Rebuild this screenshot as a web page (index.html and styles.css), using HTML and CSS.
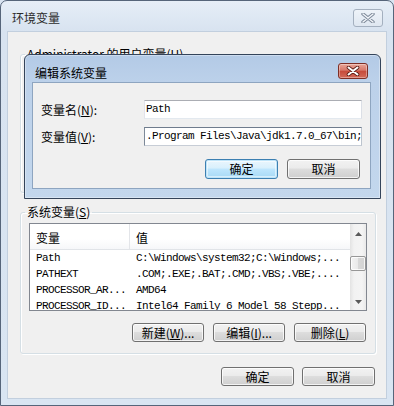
FILE: index.html
```html
<!DOCTYPE html>
<html>
<head>
<meta charset="utf-8">
<title>环境变量</title>
<link rel="stylesheet" href="styles.css">
</head>
<body>
<div class="win">
  <div class="win-title">
    <span class="title">环境变量</span>
    <span class="close-inactive">
      <svg width="14" height="10" viewBox="0 0 14 10"><path d="M2 1L12 9M12 1L2 9" stroke="#7f8b9b" stroke-width="3.4" stroke-linecap="round"/><path d="M2 1L12 9M12 1L2 9" stroke="#f4f7fb" stroke-width="1.4" stroke-linecap="round"/></svg>
    </span>
  </div>
  <div class="client">
    <fieldset class="group user">
      <legend>Administrator 的用户变量(<u>U</u>)</legend>
    </fieldset>
    <fieldset class="group sys">
      <legend>系统变量(<u>S</u>)</legend>
      <div class="list">
        <div class="list-main">
          <div class="hdr"><div class="c1">变量</div><div class="c2">值</div></div>
          <div class="row"><span class="c1">Path</span><span class="c2">C:\Windows\system32;C:\Windows;...</span></div>
          <div class="row"><span class="c1">PATHEXT</span><span class="c2">.COM;.EXE;.BAT;.CMD;.VBS;.VBE;....</span></div>
          <div class="row"><span class="c1">PROCESSOR_AR...</span><span class="c2">AMD64</span></div>
          <div class="row"><span class="c1">PROCESSOR_ID...</span><span class="c2">Intel64 Family 6 Model 58 Stepp...</span></div>
        </div>
        <div class="vscroll">
          <div class="sb-up"><svg width="7" height="4" viewBox="0 0 7 4"><path d="M0 4L3.5 0L7 4Z" fill="#5a5a5a"/></svg></div>
          <div class="sb-gap1"></div>
          <div class="sb-thumb"></div>
          <div class="sb-gap2"></div>
          <div class="sb-down"><svg width="7" height="4" viewBox="0 0 7 4"><path d="M0 0L3.5 4L7 0Z" fill="#5a5a5a"/></svg></div>
        </div>
      </div>
      <div class="btnrow group-btns">
        <span class="btn">新建(<u>W</u>)...</span>
        <span class="btn">编辑(<u>I</u>)...</span>
        <span class="btn">删除(<u>L</u>)</span>
      </div>
    </fieldset>
    <div class="btnrow main-btns">
      <span class="btn wide">确定</span>
      <span class="btn wide">取消</span>
    </div>
  </div>

  <div class="dialog">
    <div class="dlg-title">
      <span class="dlg-caption">编辑系统变量</span>
      <span class="close-active">
        <svg width="14" height="10" viewBox="0 0 14 10"><path d="M2.5 1.5L11.5 8.5M11.5 1.5L2.5 8.5" stroke="#5a1c14" stroke-width="3.6" stroke-linecap="round"/><path d="M2.5 1.5L11.5 8.5M11.5 1.5L2.5 8.5" stroke="#ffffff" stroke-width="2" stroke-linecap="round"/></svg>
      </span>
    </div>
    <div class="dlg-client">
      <div class="form">
        <label class="lbl">变量名(<u>N</u>):</label>
        <div class="input">Path</div>
        <label class="lbl">变量值(<u>V</u>):</label>
        <div class="input focused">.Program Files\Java\jdk1.7.0_67\bin;</div>
      </div>
      <div class="btnrow dlg-btns">
        <span class="btn wide default">确定</span>
        <span class="btn wide">取消</span>
      </div>
    </div>
  </div>
</div>
</body>
</html>
```

FILE: styles.css
```css
* { box-sizing: border-box; }
html, body { margin: 0; padding: 0; }
body {
  width: 394px;
  height: 406px;
  overflow: hidden;
  font-family: "Noto Sans CJK SC", "Noto Sans", sans-serif;
  font-size: 12px;
  color: #000;
  background: #d9e4f1;
}
u { text-decoration: underline; text-underline-offset: 1px; }

.win {
  position: relative;
  width: 394px;
  height: 406px;
  border: 1px solid #56657a;
  border-radius: 7px 7px 0 0;
  background: linear-gradient(#e6eef7, #d8e3f0 30px, #d9e5f2);
  padding: 0 6px 6px;
  display: flex;
  flex-direction: column;
}
.win-title {
  height: 30px;
  display: flex;
  align-items: flex-start;
  justify-content: space-between;
  flex: none;
}
.win-title .title {
  margin: 9px 0 0 5px;
  line-height: 16px;
  color: #2b2b2b;
}
.close-inactive {
  margin: 8px 4px 0 0;
  width: 30px;
  height: 18px;
  border: 1px solid #a4b0bf;
  border-radius: 3px;
  background: linear-gradient(#eef3f9, #dfe7f1);
  display: flex;
  align-items: center;
  justify-content: center;
}

.client {
  flex: 1;
  border: 1px solid #c2cfde;
  background: #f0f0f0;
  display: flex;
  flex-direction: column;
}

.group {
  width: 356px;
  margin: 11px 0 0 12px;
  padding: 0 8px;
  border: 1px solid #d5dfe5;
  border-radius: 3px;
  min-width: 0;
  box-shadow: inset 1px 1px 0 #fff, 1px 1px 0 #fff;
}
.group legend {
  padding: 0 2px;
  margin-left: -4px;
  line-height: 16px;
  height: 16px;
}
.user { height: 147px; margin-top: 14px; }
.sys { padding-top: 3px; padding-bottom: 11px; }

.list {
  height: 88px;
  border: 1px solid #828790;
  background: #fff;
  display: flex;
}
.list-main {
  flex: 1;
  overflow: hidden;
}
.hdr {
  height: 26px;
  display: flex;
  border-bottom: 1px solid #e1e4e8;
  background: linear-gradient(#ffffff, #ffffff 60%, #f6f7f9);
  align-items: stretch;
}
.hdr .c1, .hdr .c2 {
  padding: 6px 0 0 6px;
  line-height: 16px;
}
.hdr .c1 { width: 100px; border-right: 1px solid #e3e5e9; }
.row {
  height: 16px;
  display: flex;
  font-family: "Liberation Mono", "DejaVu Sans Mono", monospace;
  font-size: 11px;
  letter-spacing: -0.6px;
  line-height: 16px;
  white-space: nowrap;
}
.row .c1 { width: 100px; padding-left: 6px; overflow: hidden; flex: none; }
.row .c2 { padding-left: 6px; }

.vscroll {
  width: 16px;
  flex: none;
  display: flex;
  flex-direction: column;
  background: linear-gradient(90deg, #e3e3e3, #f2f2f2 25%, #f4f4f4 75%, #e9e9e9);
}
.sb-up, .sb-down {
  display: flex;
  align-items: center;
  justify-content: center;
}
.sb-up { height: 20px; }
.sb-down { height: 17px; }
.sb-gap1 { height: 12px; }
.sb-gap2 { flex: 1; }
.sb-thumb {
  height: 15px;
  border: 1px solid #979797;
  border-radius: 2px;
  background: linear-gradient(90deg, #f3f3f3, #e9e9e9 50%, #d8d8d8 51%, #d3d3d3);
  box-shadow: inset 0 0 0 1px rgba(255,255,255,0.8);
}

.btnrow {
  display: flex;
  justify-content: flex-end;
}
.group-btns { margin-top: 12px; gap: 9px; padding-right: 1px; }
.main-btns { margin-top: 13px; gap: 8px; padding-right: 11px; }

.btn {
  width: 72px;
  height: 19px;
  border: 1px solid #707070;
  border-radius: 3px;
  background: linear-gradient(#f2f2f2, #ebebeb 45%, #dddddd 50%, #cfcfcf);
  box-shadow: inset 0 0 0 1px rgba(255,255,255,0.75);
  text-align: center;
  line-height: 17px;
  white-space: nowrap;
}
.btn.wide { width: 73px; }
.btn.default {
  border-color: #3c7fb1;
  background: linear-gradient(#eaf6fd, #d9f0fc 45%, #bee6fd 50%, #a7d9f5);
  box-shadow: inset 0 0 0 1px #bfe4f8, inset 0 0 0 2px rgba(255,255,255,0.5);
}

/* edit dialog overlay */
.dialog {
  position: absolute;
  left: 23px;
  top: 53px;
  width: 357px;
  height: 145px;
  border: 1px solid #34445a;
  border-radius: 6px 6px 0 0;
  background: linear-gradient(#b3cae6, #bcd1ea 27px, #c3d7ed);
  box-shadow: inset 0 0 0 1px rgba(255,255,255,0.35);
  padding: 0 9px 9px 7px;
  display: flex;
  flex-direction: column;
}
.dlg-title {
  height: 27px;
  flex: none;
  display: flex;
  justify-content: space-between;
  align-items: flex-start;
}
.dlg-caption {
  margin: 10px 0 0 3px;
  line-height: 16px;
}
.close-active {
  margin: 8px 3px 0 0;
  width: 30px;
  height: 16px;
  border: 1px solid #7e2e25;
  border-radius: 3px;
  background: linear-gradient(#e8a597, #d7786a 45%, #c64a3a 50%, #d36a59);
  box-shadow: inset 0 0 0 1px rgba(255,255,255,0.35);
  display: flex;
  align-items: center;
  justify-content: center;
}
.dlg-client {
  height: 107px;
  border: 1px solid #8ea5c0;
  background: #f0f0f0;
  padding: 17px 9px 0 8px;
}
.form {
  display: grid;
  grid-template-columns: 103px 218px;
  row-gap: 8px;
}
.lbl {
  line-height: 19px;
  height: 19px;
}
.input {
  height: 19px;
  border: 1px solid;
  border-color: #abadb3 #dbdfe6 #e3e9ef #e2e3ea;
  background: #fff;
  font-family: "Liberation Mono", "DejaVu Sans Mono", monospace;
  font-size: 11px;
  letter-spacing: -0.6px;
  line-height: 17px;
  padding-left: 1px;
  white-space: nowrap;
  overflow: hidden;
}
.input.focused {
  border-color: #6f7c8d #bcc4ce #c7cdd6 #7d8998;
}
.dlg-btns {
  margin-top: 13px;
  gap: 9px;
  padding-right: 2px;
  width: 321px;
}
.dlg-btns .btn { height: 20px; line-height: 18px; }
```
